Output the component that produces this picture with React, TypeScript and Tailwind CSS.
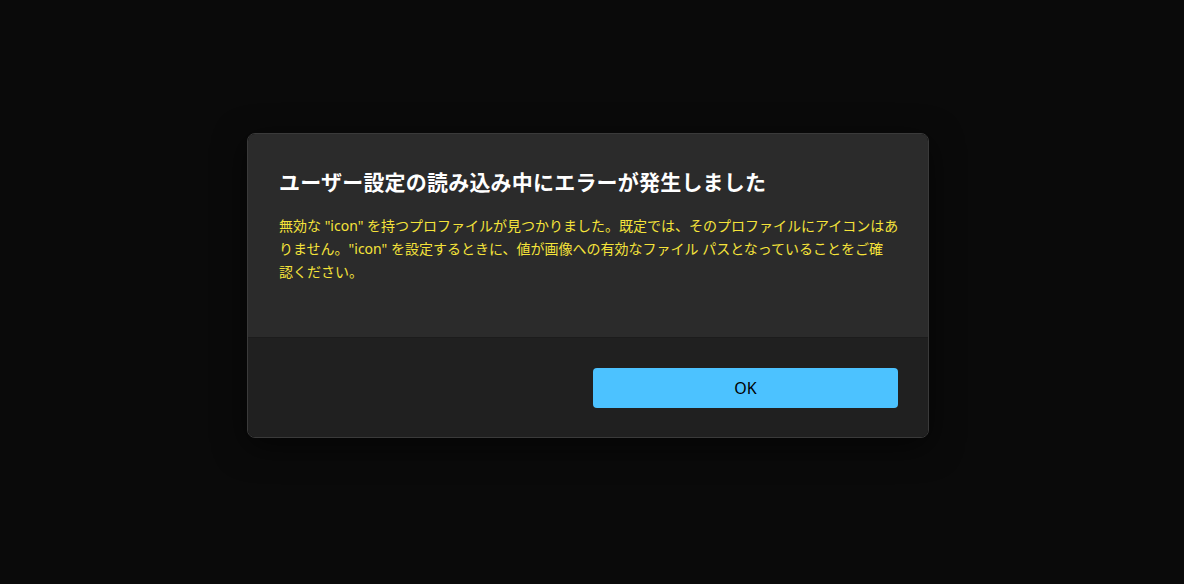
import React from "react";

export default function App() {
  return (
    <div
      className="min-h-screen w-full bg-[#0a0a0a] pt-[133px] pl-[247px]"
      style={{ fontFamily: '"Noto Sans", "Noto Sans CJK JP", sans-serif' }}
    >
      <div className="w-[682px] overflow-hidden rounded-lg border border-[#3a3a3a] shadow-[0_8px_32px_rgba(0,0,0,0.6)]">
        <div className="h-[203px] bg-[#2b2b2b] px-[31px] pt-[33px]">
          <h1 className="text-[21px] font-bold leading-[30px] tracking-[0.2px] text-white">
            ユーザー設定の読み込み中にエラーが発生しました
          </h1>
          <p className="mt-[17px] text-[14px] leading-[23px] text-[#f5e33a] whitespace-nowrap">
            <span className="block">
              無効な "icon" を持つプロファイルが見つかりました。既定では、そのプロファイルにアイコンはあ
            </span>
            <span className="block">
              りません。"icon" を設定するときに、値が画像への有効なファイル パスとなっていることをご確
            </span>
            <span className="block">認ください。</span>
          </p>
        </div>
        <div className="flex h-[100px] justify-end border-t border-[#1c1c1c] bg-[#202020] px-[30px] pt-[30px]">
          <button className="h-[40px] w-[305px] rounded-[4px] bg-[#4cc2ff] text-[16px] text-black">
            OK
          </button>
        </div>
      </div>
    </div>
  );
}
